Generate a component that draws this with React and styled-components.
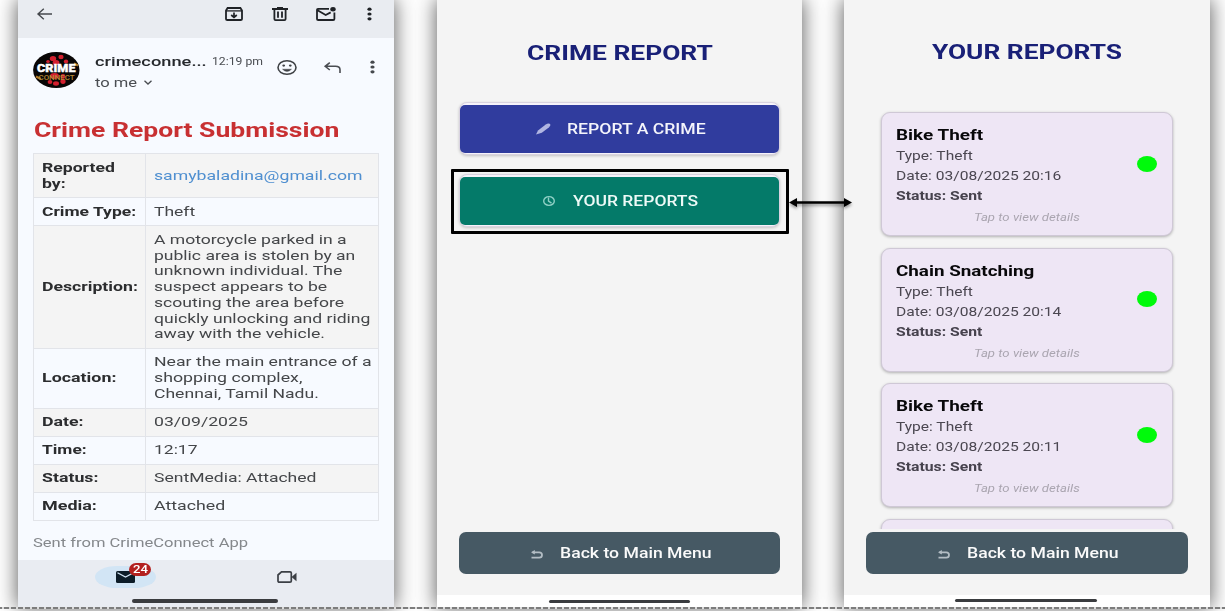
import React, { useLayoutEffect, useRef, useState } from "react";
import styled, { createGlobalStyle } from "styled-components";

const Global = createGlobalStyle`
  * { box-sizing: border-box; }
  html, body { margin: 0; padding: 0; background: #fff; overflow: hidden; }
  body { font-family: Roboto, "Liberation Sans", sans-serif; }
`;

/* ---------- wide-set text: the glyphs are stretched to the given width ---------- */
const Line = styled.span`
  display: block;
  flex: none;
  width: ${(p) => p.$w}px;
  height: ${(p) => p.$lh}px;
  line-height: ${(p) => p.$lh}px;
  font-size: ${(p) => p.$size}px;
  font-weight: ${(p) => p.$weight};
  font-style: ${(p) => (p.$italic ? "italic" : "normal")};
  color: ${(p) => p.$color};
  text-align: left;
  white-space: nowrap;
`;
const Glyphs = styled.span`
  display: inline-block;
  vertical-align: top;
  transform-origin: 0 50%;
`;
function Wide({ w, lh = 16, size = 13.5, weight = 400, color = "inherit", italic, children }) {
  const ref = useRef(null);
  const [scale, setScale] = useState(1.28);
  useLayoutEffect(() => {
    if (ref.current) setScale(w / ref.current.offsetWidth);
  }, [w, children]);
  return (
    <Line $w={w} $lh={lh} $size={size} $weight={weight} $color={color} $italic={italic}>
      <Glyphs ref={ref} style={{ transform: `scaleX(${scale})` }}>{children}</Glyphs>
    </Line>
  );
}

/* ---------- stage ---------- */
const Stage = styled.main`
  position: relative;
  width: 1225px;
  height: 611px;
  overflow: hidden;
  display: flex;
  align-items: flex-start;
  padding-left: 18px;
  background: #fff;
`;
const Phone = styled.section`
  flex: none;
  display: flex;
  flex-direction: column;
  width: ${(p) => p.$w}px;
  height: 607px;
  margin-right: ${(p) => p.$gap || 0}px;
  background: ${(p) => p.$bg || "#f4f4f4"};
  box-shadow: 0 0 19px 1px rgba(0, 0, 0, 0.62);
`;
const Dashes = styled.div`
  position: absolute;
  left: 0;
  right: 0;
  top: 607px;
  height: 2px;
  background: repeating-linear-gradient(90deg, #7d7d7d 0 5px, #dcdcdc 5px 7px);
  background-position-x: 4px;
`;
const Icon = styled.svg`
  display: block;
  flex: none;
  width: ${(p) => p.$w}px;
  height: ${(p) => p.$h}px;
  margin-left: ${(p) => p.$ml || 0}px;
  margin-top: ${(p) => p.$mt || 0}px;
  overflow: visible;
  fill: none;
  stroke: ${(p) => p.$color || "#1f2226"};
  stroke-width: ${(p) => p.$sw || 1.8};
`;

/* ---------- mail screen ---------- */
const Toolbar = styled.header`
  display: flex;
  align-items: flex-start;
  height: 38px;
  padding: 7px 0 0 19px;
  background: #e9ecf1;
`;
const Sender = styled.div`
  display: flex;
  align-items: flex-start;
  height: 77px;
  padding: 14px 0 0 15px;
`;
const SenderText = styled.div`
  width: 169px;
  margin: -1px 0 0 15px;
`;
const SenderRow = styled.div`
  display: flex;
  align-items: center;
  height: ${(p) => p.$h}px;
  gap: ${(p) => p.$gap}px;
`;
const Heading = styled.div`
  height: 38px;
  padding: 2px 0 0 15.5px;
`;
const Table = styled.div`
  width: 346px;
  margin-left: 15px;
  border: 1px solid #e2e4e9;
  border-bottom: 0;
`;
const Row = styled.div`
  display: grid;
  grid-template-columns: 112px 1fr;
  height: ${(p) => p.$h}px;
  border-bottom: 1px solid #e2e4e9;
  background: ${(p) => (p.$shade ? "#f4f4f4" : "#f7faff")};
`;
const Cell = styled.div`
  display: flex;
  flex-direction: column;
  justify-content: center;
  padding: 0 0 ${(p) => (p.$raised ? 1 : 0)}px ${(p) => (p.$label ? 7.8 : 7.5)}px;
  border-right: ${(p) => (p.$label ? "1px solid #e2e4e9" : "0")};
  color: ${(p) => (p.$label ? "#2b2c2e" : p.$link ? "#4f8fd0" : "#444649")};
`;
const Footnote = styled.div`
  flex: 1;
  padding: 13px 0 0 15px;
`;
const MailNav = styled.nav`
  height: 47px;
  background: #e9ecf2;
`;
const NavRow = styled.div`
  display: flex;
  align-items: flex-start;
  height: 39px;
  padding: 6px 0 0 77px;
`;
const Pill = styled.div`
  position: relative;
  width: 61px;
  height: 22px;
  padding: 5px 0 0 20.5px;
  border-radius: 22px / 11px;
  background: #d2e5f5;
`;
const Badge = styled.div`
  position: absolute;
  left: 34px;
  top: -3px;
  display: flex;
  justify-content: center;
  width: 22px;
  height: 13px;
  border-radius: 7px / 6.5px;
  background: #b3201f;
`;
const HomeBar = styled.div`
  width: ${(p) => p.$w}px;
  height: ${(p) => p.$h || 3}px;
  margin-left: ${(p) => p.$ml}px;
  border-radius: 2px;
  background: #3a3c3f;
`;

const ROWS = [
  { h: 44, label: [["Reported", 73]], label2: true, value: [["samybaladina@gmail.com", 208]], link: true },
  { h: 28, label: [["Crime Type:", 94.5]], value: [["Theft", 41.500]] },
  {
    h: 123,
    label: [["Description:", 95.5]],
    value: [
      ["A motorcycle parked in a", 192.5],
      ["public area is stolen by an", 201.2],
      ["unknown individual. The", 188],
      ["suspect appears to be", 173.2],
      ["scouting the area before", 190],
      ["quickly unlocking and riding", 216],
      ["away with the vehicle.", 171.2],
    ],
  },
  {
    h: 60,
    label: [["Location:", 74]],
    value: [["Near the main entrance of a", 217], ["shopping complex,", 148.5], ["Chennai, Tamil Nadu.", 165.3]],
  },
  { h: 28, label: [["Date:", 42]], value: [["03/09/2025", 94]] },
  { h: 28, label: [["Time:", 45]], value: [["12:17", 44]] },
  { h: 28, label: [["Status:", 56.5]], value: [["SentMedia: Attached", 162.5]] },
  { h: 28, label: [["Media:", 54.5]], value: [["Attached", 71]] },
];
ROWS[0].label.push(["by:", 23.5]);

const Dots = ({ ml, mt, color }) => (
  <Icon $w={5} $h={14} $ml={ml} $mt={mt} viewBox="0 0 5 14">
    {[2.2, 7, 11.8].map((y) => (
      <ellipse key={y} cx="2.5" cy={y} rx="2.1" ry="1.6" fill={color} stroke="none" />
    ))}
  </Icon>
);

const Avatar = () => (
  <Icon $w={47} $h={36} viewBox="0 0 47 36">
    <ellipse cx="23.3" cy="18" rx="23.2" ry="18" fill="#090606" stroke="none" />
    <g fill="#d3202f" stroke="none">
      <ellipse cx="20" cy="6.5" rx="3.2" ry="2.6" />
      <ellipse cx="28" cy="5" rx="2.6" ry="2.2" />
      <ellipse cx="33" cy="9.5" rx="2.2" ry="2" />
      <ellipse cx="15" cy="9.5" rx="1.8" ry="1.5" />
      <ellipse cx="23" cy="10.5" rx="3.4" ry="2.6" />
      <ellipse cx="17" cy="30" rx="2.4" ry="2" />
      <ellipse cx="23" cy="31.5" rx="3" ry="2.2" />
      <ellipse cx="30" cy="29.5" rx="2.6" ry="2.4" />
      <ellipse cx="21.5" cy="24" rx="4.5" ry="3" />
      <ellipse cx="30" cy="24.5" rx="2.4" ry="2.4" />
    </g>
    <path d="M3 24.5l5 2.500M41 11.500l4 2" stroke="#b37a25" strokeWidth="2" />
    <text x="4" y="20.200" textLength="38.500" lengthAdjust="spacingAndGlyphs" fontSize="11" fontWeight="900" fill="#fff" stroke="#fff" strokeWidth=".4">CRIME</text>
    <text x="5.500" y="28.200" textLength="36" lengthAdjust="spacingAndGlyphs" fontSize="6.500" fontWeight="500" fill="#b88a35" stroke="none">CONNECT</text>
  </Icon>
);

function MailScreen() {
  return (
    <Phone $w={376} $gap={43} $bg="#f7faff">
      <Toolbar>
        <Icon $w={15} $h={12} $mt={1} $sw={1.4} $color="#45484d" viewBox="0 0 15 12">
          <path d="M15 6H1M6.800 .800L1 6l5.800 5.200" />
        </Icon>
        <Icon $w={18} $h={14} $ml={172.500} viewBox="0 0 18 14">
          <path d="M1 3.600V12q0 1 1.300 1h13.400q1.300 0 1.300-1V3.600L15.400 1H2.600L1 3.600z" />
          <path d="M1 3.900h16" strokeWidth="1.300" />
          <path d="M9 5.600v4.800M6.200 8L9 10.400 11.800 8" strokeWidth="1.700" />
        </Icon>
        <Icon $w={16} $h={14} $ml={29} viewBox="0 0 16 14">
          <path d="M0 2h16M5 .900h6M2.400 2v10q0 1.100 1.200 1.100h8.800q1.200 0 1.200-1.100V2M6 4.500v6.300M10 4.500v6.300" />
        </Icon>
        <Icon $w={20} $h={14} $ml={28} viewBox="0 0 20 14">
          <path d="M13 1.800H2q-1 0-1 1V12q0 1 1.200 1h15q1.200 0 1.200-1V5.500M1.500 3.300L9.700 8l5-2.600" />
          <ellipse cx="17" cy="2.200" rx="2.700" ry="2.200" fill="#1f2226" stroke="none" />
        </Icon>
        <Dots ml={31} mt={0} color="#1f2226" />
      </Toolbar>
      <Sender>
        <Avatar />
        <SenderText>
          <SenderRow $h={20} $gap={6}>
            <Wide w={111} size={13.5} weight={500} color="#25282c">crimeconne...</Wide>
            <Wide w={51} size={11.5} color="#4a4d52">12:19 pm</Wide>
          </SenderRow>
          <SenderRow $h={23} $gap={7}>
            <Wide w={42} size={13} color="#4a4d52">to me</Wide>
            <Icon $w={8} $h={5} $sw={1.3} $color="#4a4d52" viewBox="0 0 8 5">
              <path d="M.500 .700L4 4 7.500 .700" />
            </Icon>
          </SenderRow>
        </SenderText>
        <Icon $w={20} $h={15} $ml={12.500} $mt={8} $sw={1.6} $color="#3f4246" viewBox="0 0 20 15">
          <ellipse cx="10" cy="7.500" rx="9" ry="6.800" />
          <path d="M5.500 9.200q4.500 4.600 9 0z" fill="#3f4246" strokeWidth=".4" />
          <ellipse cx="6.700" cy="5.600" rx="1.400" ry="1.100" fill="#3f4246" stroke="none" />
          <ellipse cx="13.300" cy="5.600" rx="1.400" ry="1.100" fill="#3f4246" stroke="none" />
        </Icon>
        <Icon $w={17} $h={11} $ml={27.500} $mt={10} $sw={1.6} $color="#4a4d52" viewBox="0 0 17 11">
          <path d="M5.800 .600L1.200 4.300l4.600 3.700M1.500 4.300h10q4.500 0 4.500 3.400V11" />
        </Icon>
        <Dots ml={29} mt={8} color="#45484d" />
      </Sender>
      <Heading>
        <Wide w={305} lh={26} size={20} weight={700} color="#c83032">Crime Report Submission</Wide>
      </Heading>
      <Table>
        {ROWS.map((r, i) => (
          <Row key={i} $h={r.h} $shade={i % 2 === 0}>
            <Cell $label $raised={i > 2}>
              {r.label.map(([t, w]) => <Wide key={t} w={w} lh={15.8} weight={700}>{t}</Wide>)}
            </Cell>
            <Cell $link={r.link} $raised={i > 2}>
              {r.value.map(([t, w]) => <Wide key={t} w={w} lh={15.8}>{t}</Wide>)}
            </Cell>
          </Row>
        ))}
      </Table>
      <Footnote>
        <Wide w={214.5} size={13.5} color="#85888c">Sent from CrimeConnect App</Wide>
      </Footnote>
      <MailNav>
        <NavRow>
          <Pill>
            <Icon $w={19} $h={12} viewBox="0 0 19 12">
              <rect width="19" height="12" rx="1.500" fill="#0c1c28" stroke="none" />
              <path d="M1.500 1.700l8 4.300 8-4.300" stroke="#d2e5f5" strokeWidth="1.300" />
            </Icon>
            <Badge><Wide w={14.5} lh={13} size={10} weight={500} color="#fff">24</Wide></Badge>
          </Pill>
          <Icon $w={20} $h={12} $ml={120.500} $mt={5} $sw={1.7} $color="#3b3f45" viewBox="0 0 20 12">
            <path d="M4.500 .900h8.500q1.300 0 1.300 1.200v7.800q0 1.200-1.300 1.200H2.300Q1 11.100 1 9.900V4z" />
            <path d="M14.500 6L19.500 1.700v8.600z" fill="#3b3f45" stroke="none" />
          </Icon>
        </NavRow>
        <HomeBar $w={146} $ml={114} $h={3.500} />
      </MailNav>
    </Phone>
  );
}

/* ---------- report screens ---------- */
const TitleBar = styled.div`
  display: flex;
  justify-content: center;
  height: ${(p) => p.$h}px;
  padding-top: ${(p) => p.$pt}px;
`;
const ActionFace = styled.div`
  display: flex;
  align-items: center;
  gap: ${(p) => p.$gap}px;
  width: 319px;
  height: 48px;
  padding-left: ${(p) => p.$pl}px;
  border-radius: 5px;
  background: ${(p) => p.$bg};
`;
const ActionRing = styled.div`
  display: flex;
  align-items: center;
  justify-content: center;
  flex: none;
  width: 321px;
  height: 53px;
  margin-left: ${(p) => p.$ml || 0}px;
  border: 1px solid #d9d3e0;
  border-radius: 8px;
  background: #f6f3fa;
  box-shadow: 0 1px 3px rgba(0, 0, 0, 0.2);
`;
const Highlight = styled.div`
  width: 338px;
  height: 65px;
  margin: 14px 0 0 14px;
  padding: 2px 0 0 5px;
  border: 3px solid #000;
  border-radius: 1px;
`;
const Spacer = styled.div`
  flex: 1;
`;
const BackButton = styled.button`
  display: flex;
  flex: none;
  align-items: center;
  gap: 17px;
  width: ${(p) => p.$w}px;
  height: 42px;
  margin: 0 0 21px 22px;
  padding: 2px 0 0 72px;
  border: 0;
  border-radius: 7px;
  background: #465964;
  font-family: inherit;
`;
const SystemNav = styled.div`
  flex: none;
  height: 12px;
  padding-top: ${(p) => p.$pt}px;
  background: #fff;
`;
const ArrowLayer = styled.svg`
  position: absolute;
  left: 788px;
  top: 194px;
  width: 65px;
  height: 17px;
  filter: drop-shadow(0 2px 1.5px rgba(0, 0, 0, 0.4));
`;

const Back = ({ w }) => (
  <BackButton $w={w}>
    <Icon $w={12} $h={9} $sw={1.8} $color="#b3bdc4" viewBox="0 0 12 9">
      <path d="M1.500 2.300h6.800q2.700 0 2.700 2.700t-2.700 2.700H.500" />
      <path d="M0 2.300L3.800 0v4.600z" fill="#b3bdc4" stroke="none" />
    </Icon>
    <Wide w={152} lh={20} size={14.5} weight={500} color="#fafafa">Back to Main Menu</Wide>
  </BackButton>
);

function MenuScreen() {
  return (
    <Phone $w={365} $gap={42}>
      <TitleBar $h={102} $pt={40}>
        <Wide w={186} lh={26} size={21} weight={700} color="#192077">CRIME REPORT</Wide>
      </TitleBar>
      <ActionRing $ml={22}>
        <ActionFace $bg="#303c9e" $pl={76} $gap={15.5}>
          <Icon $w={15} $h={12} viewBox="0 0 15 12">
            <path d="M0 11.500L2 7.400 9.400 1.800Q12 0 14.200 .900q.800 1.700-1.400 3.600L5.800 9.700z" fill="#b1b6e2" stroke="none" />
            <path d="M9.800 1.700l3.200 2.500" stroke="#a0a6da" strokeWidth=".5" />
          </Icon>
          <Wide w={138.5} lh={20} size={14} weight={500} color="#f4f4fb">REPORT A CRIME</Wide>
        </ActionFace>
      </ActionRing>
      <Highlight>
        <ActionRing>
          <ActionFace $bg="#047a69" $pl={83} $gap={18}>
            <Icon $w={12} $h={10} $sw={1.4} $color="#8fd0c5" viewBox="0 0 12 10">
              <ellipse cx="6" cy="5" rx="5.300" ry="4.400" />
              <path d="M5.500 1.500v3.700l3 2" />
            </Icon>
            <Wide w={125} lh={20} size={14} weight={500} color="#eefaf7">YOUR REPORTS</Wide>
          </ActionFace>
        </ActionRing>
      </Highlight>
      <Spacer />
      <Back w={321} />
      <SystemNav $pt={4.5}><HomeBar $w={141} $ml={112} /></SystemNav>
    </Phone>
  );
}

const CardList = styled.div`
  display: flex;
  flex-direction: column;
  gap: 11.5px;
  height: 421px;
  padding: 4px 0 0 37px;
  overflow: hidden;
`;
const Card = styled.article`
  flex: none;
  display: flex;
  align-items: center;
  width: 292px;
  height: 124px;
  border: 1px solid #cfc8d6;
  border-radius: 9px;
  background: #eee6f5;
  box-shadow: 0 1px 3px rgba(0, 0, 0, 0.28);
`;
const CardText = styled.div`
  align-self: flex-start;
  width: 254.5px;
  padding: 11.4px 0 0 14.3px;
`;
const Hint = styled.div`
  padding: 3.6px 0 0 77.7px;
`;
const Dot = styled.div`
  width: 20px;
  height: 16px;
  margin-bottom: 21px;
  border-radius: 50%;
  background: #00fa0b;
`;

const REPORTS = [
  { title: "Bike Theft", w: 87, date: "03/08/2025 20:16" },
  { title: "Chain Snatching", w: 138, date: "03/08/2025 20:14" },
  { title: "Bike Theft", w: 87, date: "03/08/2025 20:11" },
];

function ReportsScreen() {
  return (
    <Phone $w={366}>
      <TitleBar $h={108} $pt={39}>
        <Wide w={190.5} lh={26} size={21} weight={700} color="#192077">YOUR REPORTS</Wide>
      </TitleBar>
      <CardList>
        {REPORTS.map((r, i) => (
          <Card key={i}>
            <CardText>
              <Wide w={r.w} lh={22} size={15} weight={700} color="#08080a">{r.title}</Wide>
              <Wide w={76.5} lh={20} size={13} color="#4b4751">Type: Theft</Wide>
              <Wide w={165.5} lh={19.7} size={13} color="#4b4751">{"Date: " + r.date}</Wide>
              <Wide w={86} lh={19.7} size={13} weight={700} color="#46424d">Status: Sent</Wide>
              <Hint>
                <Wide w={105.5} lh={17} size={11.5} italic color="#aaa5b0">Tap to view details</Wide>
              </Hint>
            </CardText>
            <Dot />
          </Card>
        ))}
        <Card />
      </CardList>
      <Spacer />
      <Back w={322} />
      <SystemNav $pt={4}><HomeBar $w={142} $ml={111} /></SystemNav>
    </Phone>
  );
}

export default function App() {
  return (
    <>
      <Global />
      <Stage>
        <MailScreen />
        <MenuScreen />
        <ReportsScreen />
        <Dashes />
        <ArrowLayer viewBox="0 0 65 17">
          <path d="M6 8.500h53" stroke="#000" strokeWidth="2.600" />
          <path d="M1 8.500L9 4v9zM64 8.500L56 4v9z" />
        </ArrowLayer>
      </Stage>
    </>
  );
}
